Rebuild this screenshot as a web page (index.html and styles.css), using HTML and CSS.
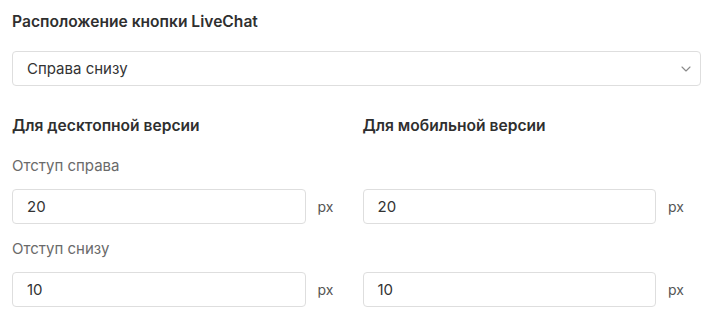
FILE: index.html
```html
<!DOCTYPE html>
<html lang="ru">
<head>
<meta charset="utf-8">
<link rel="stylesheet" href="styles.css">
</head>
<body>
<div class="panel">
  <div class="title">Расположение кнопки LiveChat</div>
  <div class="select">
    <span class="select-value">Справа снизу</span>
    <svg class="chevron" width="10" height="6" viewBox="0 0 10 6"><path d="M1 1l4 4 4-4" fill="none" stroke="#8a8a8a" stroke-width="1.1" stroke-linecap="round" stroke-linejoin="round"/></svg>
  </div>
  <div class="columns">
    <div class="column">
      <div class="heading">Для десктопной версии</div>
      <div class="label">Отступ справа</div>
      <div class="field"><div class="input">20</div><span class="unit">px</span></div>
      <div class="label">Отступ снизу</div>
      <div class="field"><div class="input">10</div><span class="unit">px</span></div>
    </div>
    <div class="column">
      <div class="heading">Для мобильной версии</div>
      <div class="label label-empty"></div>
      <div class="field"><div class="input">20</div><span class="unit">px</span></div>
      <div class="label label-empty"></div>
      <div class="field"><div class="input">10</div><span class="unit">px</span></div>
    </div>
  </div>
</div>
</body>
</html>
```

FILE: styles.css
```css
html, body {
  margin: 0;
  padding: 0;
  background: #ffffff;
}
body {
  font-family: Inter, "Noto Sans", sans-serif;
  color: #333333;
}
.panel {
  width: 689px;
  padding: 12px 0 0 12px;
}
.title {
  font-size: 15.6px;
  font-weight: 600;
  line-height: 20px;
  color: #2f2f2f;
}
.select {
  margin-top: 19px;
  height: 35px;
  box-sizing: border-box;
  border: 1px solid #dedede;
  border-radius: 4px;
  display: flex;
  align-items: center;
  justify-content: space-between;
  padding: 0 9px 0 14px;
}
.select-value {
  font-size: 15px;
  color: #333333;
}
.chevron {
  display: block;
}
.columns {
  display: grid;
  grid-template-columns: 1fr 1fr;
  column-gap: 12px;
  margin-top: 30px;
}
.column {
  display: flex;
  flex-direction: column;
}
.heading {
  font-size: 15.6px;
  font-weight: 600;
  line-height: 20px;
  color: #2f2f2f;
  margin-bottom: 20px;
}
.label {
  font-size: 15px;
  line-height: 20px;
  height: 20px;
  color: #6a6a6a;
  margin-bottom: 13px;
}
.field {
  display: flex;
  align-items: center;
  gap: 12px;
  padding-right: 18px;
  margin-bottom: 15px;
}
.input {
  flex: 1;
  height: 35px;
  box-sizing: border-box;
  border: 1px solid #dedede;
  border-radius: 4px;
  display: flex;
  align-items: center;
  padding-left: 14px;
  font-size: 15px;
  color: #333333;
}
.unit {
  width: 15px;
  font-size: 14px;
  color: #555555;
}
```
